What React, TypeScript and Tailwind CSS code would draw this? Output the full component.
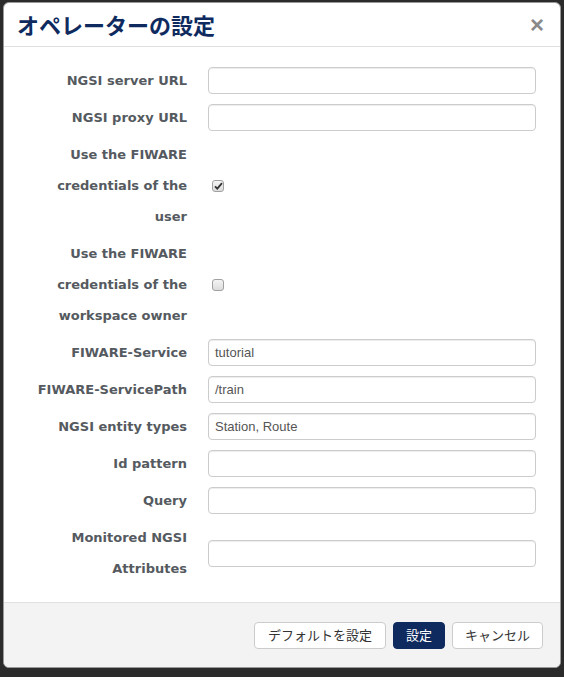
import React from "react";

const labelFont = { fontFamily: '"DejaVu Sans", Verdana, sans-serif' };

function Label({ lines }: { lines: string[] }) {
  return (
    <div
      className="w-[168px] shrink-0 text-right text-[13px] font-bold leading-[31px] text-[#555a60]"
      style={labelFont}
    >
      {lines.map((l, i) => (
        <div key={i}>{l}</div>
      ))}
    </div>
  );
}

function TextInput({ value }: { value?: string }) {
  return (
    <div className="ml-[21px] flex h-[27px] w-[328px] items-center rounded-[4px] border border-[#ccc] bg-white px-[6px] text-[13px] text-[#555] shadow-[inset_0_1px_1px_rgba(0,0,0,0.075)] [font-family:'Liberation_Sans',Arial,sans-serif]">
      {value}
    </div>
  );
}

function Check({ checked }: { checked?: boolean }) {
  return (
    <div className="ml-[25px] flex h-[12px] w-[12px] items-center justify-center rounded-[3px] border border-[#a0a0a0] bg-gradient-to-b from-[#f4f4f4] to-[#dcdcdc]">
      {checked && (
        <svg width="9" height="8" viewBox="0 0 9 8">
          <path d="M1 4.3 L3.3 6.6 L8 1.2" stroke="#333" strokeWidth="1.8" fill="none" />
        </svg>
      )}
    </div>
  );
}

function Row({ lines, children }: { lines: string[]; children: React.ReactNode }) {
  return (
    <div className="flex items-center">
      <Label lines={lines} />
      {children}
    </div>
  );
}

export default function App() {
  return (
    <div className="h-[677px] w-[564px] bg-[#2b2b2b] pl-[3px] pt-[2px]">
      <div className="flex h-[666px] w-[558px] flex-col overflow-hidden rounded-[6px] border border-[#999] bg-white">
        <div className="flex h-[44px] shrink-0 items-center justify-between border-b border-[#e0e0e0] pl-[13px] pr-[16px]">
          <div
            className="text-[22px] font-bold text-[#0e2a5e]"
            style={{ fontFamily: '"Noto Sans CJK JP", sans-serif' }}
          >
            オペレーターの設定
          </div>
          <div
            className="text-[24px] font-bold leading-none text-[#8a8a8a]"
            style={{ fontFamily: '"Liberation Sans", Arial, sans-serif' }}
          >
            ×
          </div>
        </div>
        <div className="flex flex-1 flex-col gap-[6px] pl-[15px] pt-[18px]">
          <Row lines={["NGSI server URL"]}>
            <TextInput />
          </Row>
          <Row lines={["NGSI proxy URL"]}>
            <TextInput />
          </Row>
          <Row lines={["Use the FIWARE", "credentials of the", "user"]}>
            <Check checked />
          </Row>
          <Row lines={["Use the FIWARE", "credentials of the", "workspace owner"]}>
            <Check />
          </Row>
          <Row lines={["FIWARE-Service"]}>
            <TextInput value="tutorial" />
          </Row>
          <Row lines={["FIWARE-ServicePath"]}>
            <TextInput value="/train" />
          </Row>
          <Row lines={["NGSI entity types"]}>
            <TextInput value="Station, Route" />
          </Row>
          <Row lines={["Id pattern"]}>
            <TextInput />
          </Row>
          <Row lines={["Query"]}>
            <TextInput />
          </Row>
          <Row lines={["Monitored NGSI", "Attributes"]}>
            <TextInput />
          </Row>
        </div>
        <div
          className="flex h-[65px] shrink-0 items-center justify-end gap-[7px] border-t border-[#e0e0e0] bg-[#f3f3f3] pr-[17px] text-[13px]"
          style={{ fontFamily: '"Noto Sans CJK JP", sans-serif' }}
        >
          <button className="flex h-[27px] items-center rounded-[4px] border border-[#ccc] bg-white px-[13px] text-[#333]">
            デフォルトを設定
          </button>
          <button className="flex h-[27px] items-center rounded-[4px] border border-[#0e2a5e] bg-[#0e2a5e] px-[12px] text-white">
            設定
          </button>
          <button className="flex h-[27px] items-center rounded-[4px] border border-[#ccc] bg-white px-[12px] text-[#333]">
            キャンセル
          </button>
        </div>
      </div>
    </div>
  );
}
